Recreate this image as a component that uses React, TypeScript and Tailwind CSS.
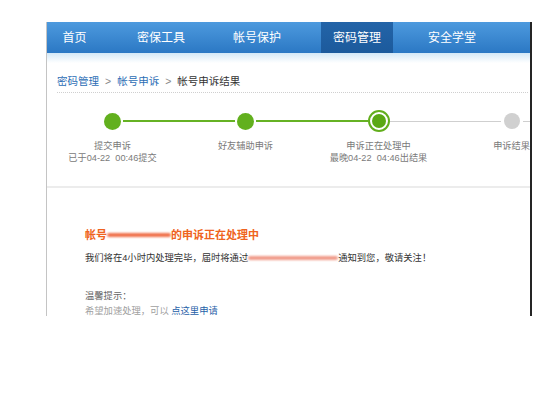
const NAV = [
  { label: "首页", w: "w-[55px]", ml: "ml-0" },
  { label: "密保工具", w: "w-[72px]", ml: "ml-[23px]" },
  { label: "帐号保护", w: "w-[72px]", ml: "ml-[24px]" },
  { label: "密码管理", w: "w-[72px]", ml: "ml-[28px]", active: true },
  { label: "安全学堂", w: "w-[72px]", ml: "ml-[23px]" },
];

const STEPS = [
  { title: "提交申诉", sub: "已于04-22  00:46提交", left: "none", right: "green", dot: "done" },
  { title: "好友辅助申诉", sub: "", left: "green", right: "green", dot: "done" },
  { title: "申诉正在处理中", sub: "最晚04-22  04:46出结果", left: "green", right: "gray", dot: "current" },
  { title: "申诉结果", sub: "", left: "gray", right: "gray", dot: "todo" },
];

function Line({ kind }: { kind: string }) {
  if (kind === "none") return <div className="flex-1" />;
  return (
    <div
      className={`flex-1 ${kind === "green" ? "h-[2px] bg-[#66b224]" : "h-px bg-[#cfcfcf]"}`}
    />
  );
}

function Dot({ kind }: { kind: string }) {
  if (kind === "current") {
    return (
      <div className="w-[22px] h-[22px] rounded-full border-2 border-[#62ae1c] bg-white flex items-center justify-center">
        <div className="w-[14px] h-[14px] rounded-full bg-[#5aa814]" />
      </div>
    );
  }
  if (kind === "todo") {
    return <div className="w-[16px] h-[16px] rounded-full bg-[#d0d0d0] mx-[3px]" />;
  }
  return <div className="w-[17px] h-[17px] rounded-full bg-[#62b01e] mx-[2px]" />;
}

function Smudge({ w, color }: { w: string; color: string }) {
  return (
    <span className={`inline-block ${w} h-[12px] align-middle relative`}>
      <span className={`absolute left-0 right-0 top-[4px] h-[4px] rounded-full blur-[1.2px] ${color}`} />
    </span>
  );
}

export default function App() {
  return (
    <div className="w-[551px] h-[394px] bg-white overflow-hidden font-['Liberation_Sans','Noto_Sans_CJK_SC',sans-serif]">
      <div className="ml-[46px] mt-[22px] w-[486px] h-[294px] border-l border-l-[#c4c4c4] border-r-2 border-r-[#252525] overflow-hidden">
        {/* nav */}
        <div className="h-[31px] flex items-stretch bg-gradient-to-b from-[#4d9ade] to-[#2b78c4]">
          {NAV.map((n) => (
            <div
              key={n.label}
              className={`${n.w} ${n.ml} flex items-center justify-center text-[12px] text-white ${
                n.active ? "bg-gradient-to-b from-[#2364a8] to-[#1c5a9c]" : ""
              }`}
            >
              {n.label}
            </div>
          ))}
        </div>
        <div className="h-[10px] bg-gradient-to-b from-[#d3e8f7] to-white" />

        {/* breadcrumb */}
        <div className="h-[30px] flex items-end pb-[5px] ml-[10px] mr-[2px] text-[10.5px] leading-[12px] border-b border-dotted border-b-[#cfcfcf]">
          <span className="text-[#2c6db5]">密码管理</span>
          <span className="mx-[6px] text-[#888]">&gt;</span>
          <span className="text-[#2c6db5]">帐号申诉</span>
          <span className="mx-[6px] text-[#888]">&gt;</span>
          <span className="text-[#333]">帐号申诉结果</span>
        </div>

        {/* steps */}
        <div className="h-[95px] border-b-2 border-b-[#ececec]">
          <div className="flex ml-[-1px] pt-[17px]">
            {STEPS.map((s) => (
              <div key={s.title} className="w-[133px] shrink-0 flex flex-col items-center">
                <div className="w-full h-[22px] flex items-center">
                  <Line kind={s.left} />
                  <Dot kind={s.dot} />
                  <Line kind={s.right} />
                </div>
                <div className="mt-[8px] text-[9.2px] leading-[12px] text-[#7a7a7a] text-center whitespace-pre">
                  <div>{s.title}</div>
                  {s.sub && <div>{s.sub}</div>}
                </div>
              </div>
            ))}
          </div>
        </div>

        {/* result */}
        <div className="pl-[38px] pt-[40px]">
          <div className="text-[11px] leading-[14px] font-bold text-[#ef6320] flex items-center">
            <span>帐号</span>
            <Smudge w="w-[64px]" color="bg-[#f0704a]" />
            <span>的申诉正在处理中</span>
          </div>
          <div className="mt-[10px] text-[9.3px] leading-[12px] text-[#333] flex items-center">
            <span>我们将在4小时内处理完毕，届时将通过</span>
            <Smudge w="w-[90px]" color="bg-[#f09a88]" />
            <span>通知到您，敬请关注！</span>
          </div>
          <div className="mt-[26px] text-[9.3px] leading-[12px] text-[#666]">温馨提示：</div>
          <div className="mt-[3px] text-[9.3px] leading-[12px] text-[#a0a0a0]">
            希望加速处理，可以 <span className="text-[#1f5fa8]">点这里申请</span>
          </div>
        </div>
      </div>
    </div>
  );
}
